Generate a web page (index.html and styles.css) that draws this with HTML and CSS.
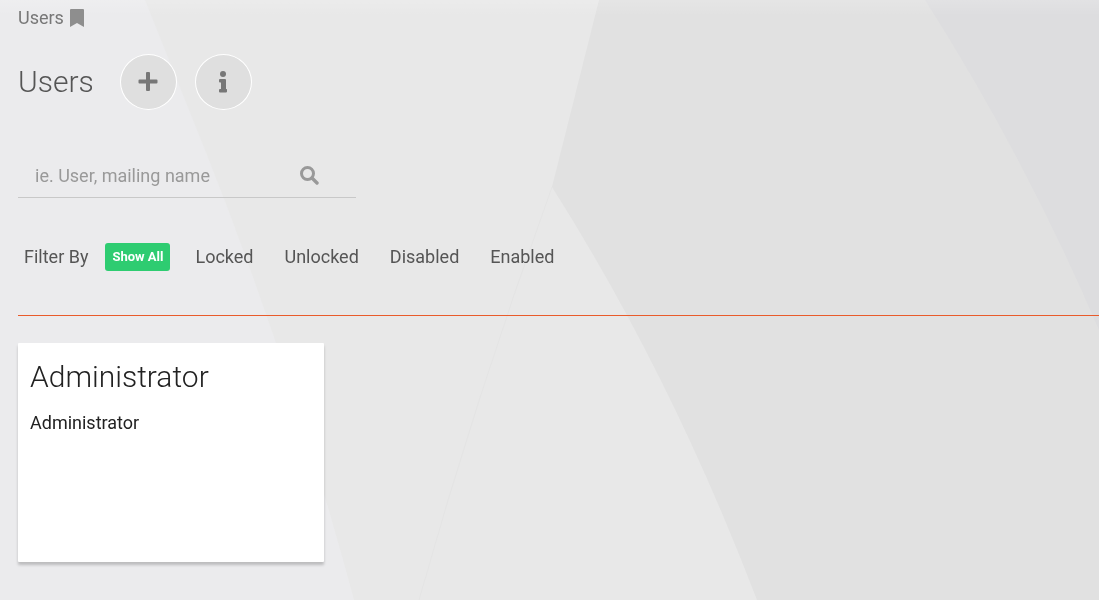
FILE: index.html
```html
<!DOCTYPE html>
<html lang="en">
<head>
    <meta charset="UTF-8">
    <meta name="viewport" content="width=device-width, initial-scale=1.0">
    <title>Users</title>
    <link rel="stylesheet" href="styles.css">
</head>
<body>
    <svg class="backdrop" viewBox="0 0 1099 600" preserveAspectRatio="xMinYMin slice" aria-hidden="true">
        <rect width="1099" height="600" fill="#e8e8e8"/>
        <path d="M0 0H145L205 150Q293 372 354 600H0Z" fill="#ebebed"/>
        <path d="M599 0H1099V600H757Q671 375 552 187Z" fill="#e1e1e1"/>
        <path d="M925 0H1099V330Q1024 155 925 0Z" fill="#dddddf"/>
        <path d="M552 187Q475 400 419 600" fill="none" stroke="#e4e4e4"/>
    </svg>

    <nav class="breadcrumb">
        <a href="#">Users</a>
        <button class="bookmark" aria-label="Bookmark this page">
            <svg width="14" height="18" viewBox="0 0 14 18"><path d="M1 0H13Q14 0 14 1V18L7 14L0 18V1Q0 0 1 0Z"/></svg>
        </button>
    </nav>

    <header class="page-header">
        <h1>Users</h1>
        <button class="round-btn" aria-label="Add user">
            <svg width="20" height="20" viewBox="0 0 20 20"><path d="M9 0H11Q12 0 12 1V7.5H18.5Q19.5 7.5 19.5 8.5V10.5Q19.5 11.5 18.5 11.5H12V18Q12 19 11 19H9Q8 19 8 18V11.5H1.5Q.5 11.5 .5 10.5V8.5Q.5 7.5 1.5 7.5H8V1Q8 0 9 0Z"/></svg>
        </button>
        <button class="round-btn" aria-label="Information">
            <svg width="20" height="22" viewBox="0 0 20 22"><circle cx="10" cy="3" r="3"/><path d="M7 8H12Q13 8 13 9V18H13.5Q14 18 14 18.7V20.5Q14 21.5 13 21.5H7Q6 21.5 6 20.5V19Q6 18 7 18H8V11.5H7Q6 11.5 6 10.5V9Q6 8 7 8Z"/></svg>
        </button>
    </header>

    <form class="search">
        <input type="text" aria-label="Search users" placeholder="ie. User, mailing name">
        <button type="submit" aria-label="Search">
            <svg width="19" height="19" viewBox="0 0 19 19"><circle cx="7.5" cy="7.5" r="6" fill="none" stroke="currentColor" stroke-width="3"/><path d="M12 12L17 17" stroke="currentColor" stroke-width="3.4" stroke-linecap="round"/></svg>
        </button>
    </form>

    <div class="filters">
        <span class="filter-label">Filter By</span>
        <a class="active" href="#">Show All</a>
        <a href="#">Locked</a>
        <a href="#">Unlocked</a>
        <a href="#">Disabled</a>
        <a href="#">Enabled</a>
    </div>

    <main class="cards">
        <article class="card">
            <h2>Administrator</h2>
            <p>Administrator</p>
        </article>
    </main>
</body>
</html>
```
FILE: styles.css
```css
* {
    margin: 0;
    padding: 0;
    box-sizing: border-box;
}

body {
    min-height: 100vh;
    padding: 6px 0 32px 18px;
    font-family: Roboto, "Liberation Sans", sans-serif;
    font-size: 18px;
    line-height: 24px;
    color: #555;
    background-color: #e8e8e8;
}

/* lighter strip along the top edge */
body::before {
    content: "";
    position: fixed;
    top: 0;
    left: 0;
    right: 0;
    height: 16px;
    z-index: -1;
    background: linear-gradient(rgba(255, 255, 255, 0.15), rgba(255, 255, 255, 0));
}

.backdrop {
    position: fixed;
    top: 0;
    left: 0;
    width: 100%;
    height: 100%;
    z-index: -2;
}

a {
    color: inherit;
    text-decoration: none;
}

button {
    border: none;
    background: none;
    cursor: pointer;
}

svg {
    display: block;
    fill: currentColor;
}

.breadcrumb {
    display: flex;
    align-items: center;
    gap: 6px;
    color: #777;
}

.bookmark {
    color: #8e8e8e;
}

.page-header {
    display: flex;
    align-items: center;
    gap: 18px;
    margin-top: 24px;
}

h1,
h2 {
    font-size: 30px;
    font-weight: 300;
    line-height: 40px;
}

h1 {
    margin-right: 8px;
}

.round-btn {
    display: flex;
    align-items: center;
    justify-content: center;
    width: 57px;
    height: 56px;
    border: 1px solid #fff;
    border-radius: 50%;
    color: #777;
    background-color: #dfdfdf;
}

.search {
    display: flex;
    align-items: center;
    width: 338px;
    max-width: 100%;
    height: 44px;
    margin-top: 44px;
    padding: 0 37px 0 17px;
    border-bottom: 1px solid #c8c8c8;
}

.search input {
    flex: 1;
    min-width: 0;
    border: none;
    outline: none;
    background: none;
    font: inherit;
}

.search input::placeholder {
    color: #999;
}

.search button {
    color: #999;
}

.filters {
    display: flex;
    flex-wrap: wrap;
    align-items: center;
    gap: 31px;
    padding: 45px 6px 44px;
    border-bottom: 1px solid #e95b2b;
}

.filter-label {
    margin-right: -14px;
}

.filters .active {
    margin-right: -6px;
    padding: 2px 7px;
    border-radius: 3px;
    font-size: 13px;
    font-weight: bold;
    color: #fff;
    background-color: #2ecc71;
}

.cards {
    display: flex;
    flex-wrap: wrap;
    gap: 18px;
    padding-top: 27px;
}

.card {
    width: 306px;
    min-height: 219px;
    padding: 14px 12px;
    color: #222;
    background-color: #fff;
    border-radius: 1px;
    box-shadow: 0 3px 3px rgba(0, 0, 0, 0.2);
}

h2 {
    margin-bottom: 14px;
}
```
